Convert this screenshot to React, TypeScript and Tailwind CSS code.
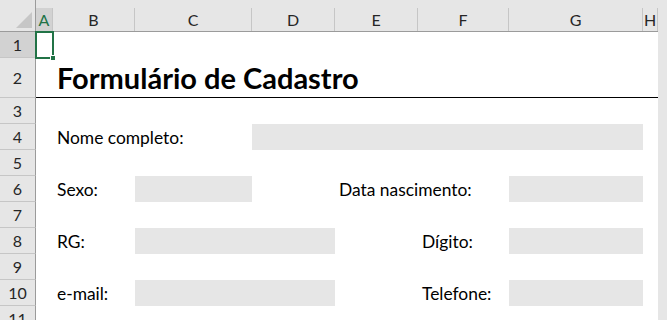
const cols = ["A", "B", "C", "D", "E", "F", "G", "H"];
const rowHeights = [26, 40, 26, 26, 26, 26, 26, 26, 26, 26, 26];

function Label({ text, className = "" }: { text: string; className?: string }) {
  return (
    <div className={`flex items-end pb-[4px] pl-[4px] whitespace-nowrap text-[17.4px] leading-none text-black ${className}`}>
      {text}
    </div>
  );
}

function Field({ className = "" }: { className?: string }) {
  return <div className={`bg-[#e6e6e6] ${className}`} />;
}

export default function App() {
  return (
    <div
      className="w-[667px] h-[320px] overflow-hidden bg-[#e6e6e6] flex"
      style={{ fontFamily: "Lato, 'Noto Sans', sans-serif" }}
    >
      <div className="relative w-[658px] shrink-0 bg-white grid grid-cols-[36px_17px_82px_117px_83px_83px_91px_134px_15px] grid-rows-[32px_26px_40px_repeat(9,26px)]">
        {/* corner */}
        <div className="col-start-1 row-start-1 bg-[#e6e6e6] border-r border-b border-[#9b9b9b] relative">
          <div className="absolute right-[3px] bottom-[3px] w-0 h-0 border-l-[16px] border-l-transparent border-b-[16px] border-b-[#c6c6c6]" />
        </div>
        {/* column headers */}
        {cols.map((c, i) => (
          <div
            key={c}
            className="row-start-1 bg-[#e6e6e6] border-b border-[#9b9b9b] pt-[8px]"
            style={{ gridColumnStart: i + 2 }}
          >
            <div
              className={`h-full border-r border-[#c6c6c6] flex items-center justify-center text-[16px] leading-none ${
                c === "A" ? "bg-[#d2d2d2] text-[#217346]" : "text-[#262626]"
              }`}
            >
              {c}
            </div>
          </div>
        ))}
        {/* row headers */}
        {rowHeights.map((_, i) => (
          <div
            key={i}
            className={`col-start-1 border-r border-b border-r-[#9b9b9b] border-b-[#c6c6c6] flex items-center justify-center text-[16px] leading-none text-[#262626] ${
              i === 0 ? "bg-[#d2d2d2]" : "bg-[#e6e6e6]"
            }`}
            style={{ gridRowStart: i + 2 }}
          >
            {i + 1}
          </div>
        ))}

        {/* row 2: title */}
        <div className="row-start-3 col-start-2 col-end-10 border-b border-black" />
        <div className="row-start-3 col-start-3 col-end-10 flex items-end pb-[6px] pl-[4px] text-[29px] font-bold leading-none text-black whitespace-nowrap">
          Formulário de Cadastro
        </div>

        {/* row 4 */}
        <Label text="Nome completo:" className="row-start-5 col-start-3 col-end-5" />
        <Field className="row-start-5 col-start-5 col-end-9" />

        {/* row 6 */}
        <Label text="Sexo:" className="row-start-7 col-start-3" />
        <Field className="row-start-7 col-start-4" />
        <Label text="Data nascimento:" className="row-start-7 col-start-6 col-end-8" />
        <Field className="row-start-7 col-start-8" />

        {/* row 8 */}
        <Label text="RG:" className="row-start-9 col-start-3" />
        <Field className="row-start-9 col-start-4 col-end-6" />
        <Label text="Dígito:" className="row-start-9 col-start-7" />
        <Field className="row-start-9 col-start-8" />

        {/* row 10 */}
        <Label text="e-mail:" className="row-start-11 col-start-3" />
        <Field className="row-start-11 col-start-4 col-end-6" />
        <Label text="Telefone:" className="row-start-11 col-start-7" />
        <Field className="row-start-11 col-start-8" />

        {/* selected cell A1 */}
        <div className="absolute left-[35px] top-[31px] w-[19px] h-[28px] border-2 border-[#217346]" />
        <div className="absolute left-[50px] top-[55px] w-[6px] h-[6px] bg-[#217346] border border-white" />
      </div>
      <div className="flex-1" />
    </div>
  );
}
